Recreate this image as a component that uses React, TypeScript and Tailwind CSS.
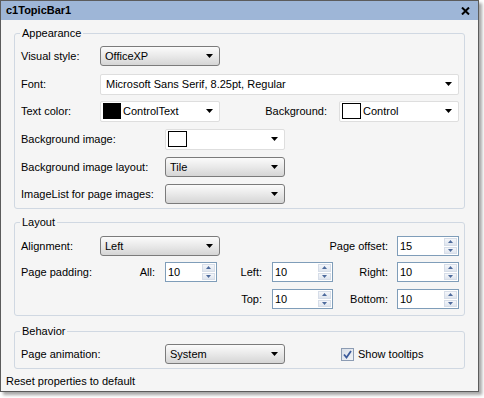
import React from 'react'

// Small black combo arrow
function Arrow() {
  return (
    <svg width="7" height="4" viewBox="0 0 7 4" className="shrink-0">
      <polygon points="0,0 7,0 3.5,4" fill="#000" />
    </svg>
  )
}

function XpCombo({ text, className }: { text?: string; className: string }) {
  return (
    <div
      className={
        'h-[20px] rounded-[3px] border border-[#7b7b7b] bg-gradient-to-b from-[#fbfbfb] via-[#e9e9e9] to-[#d5d5d5] flex items-center justify-between pl-[4px] pr-[6px] ' +
        className
      }
    >
      <span>{text}</span>
      <Arrow />
    </div>
  )
}

function WhiteCombo({
  text,
  swatch,
  className,
}: {
  text?: string
  swatch?: 'black' | 'white'
  className: string
}) {
  return (
    <div
      className={
        'h-[21px] rounded-[2px] border border-[#dedede] bg-white flex items-center justify-between pl-[2px] pr-[6px] ' +
        className
      }
    >
      <div className="flex items-center">
        {swatch === 'black' && <div className="w-[18px] h-[16px] bg-black border border-black" />}
        {swatch === 'white' && <div className="w-[19px] h-[16px] bg-white border border-black" />}
        {text && <span className={swatch ? 'ml-[2px]' : 'ml-[3px]'}>{text}</span>}
      </div>
      <Arrow />
    </div>
  )
}

function SpinArrow({ up }: { up?: boolean }) {
  return (
    <svg width="5" height="3" viewBox="0 0 5 3">
      <polygon points={up ? '0,3 5,3 2.5,0' : '0,0 5,0 2.5,3'} fill="#4d6a9c" />
    </svg>
  )
}

function Spin({ value, className }: { value: string; className: string }) {
  return (
    <div className={'h-[20px] border border-[#7f9db9] bg-white flex ' + className}>
      <span className="flex-1 pl-[2px] flex items-center">{value}</span>
      <div className="w-[15px] flex flex-col gap-[1px] p-[1px]">
        <div className="flex-1 flex items-center justify-center border border-[#d6dde8] bg-gradient-to-b from-[#f4f6fa] to-[#dfe5ee]">
          <SpinArrow up />
        </div>
        <div className="flex-1 flex items-center justify-center border border-[#d6dde8] bg-gradient-to-b from-[#f4f6fa] to-[#dfe5ee]">
          <SpinArrow />
        </div>
      </div>
    </div>
  )
}

function Group({ title, className, children }: { title: string; className: string; children: React.ReactNode }) {
  return (
    <div className={'relative rounded-[3px] border border-[#d0d8e2] ' + className}>
      <span className="absolute -top-[7px] left-[5px] px-[2px] bg-[#f5f5f5] leading-[13px]">{title}</span>
      {children}
    </div>
  )
}

export default function App() {
  return (
    <div className="w-[484px] h-[398px] bg-white font-['Liberation_Sans',Arial,sans-serif] text-[11px] leading-[13px] text-black">
      <div className="w-[479px] h-[392px] border border-[#5c5c5c] bg-[#f5f5f5] flex flex-col shadow-[3px_3px_3px_rgba(0,0,0,0.35)]">
        {/* Title bar */}
        <div className="h-[19px] shrink-0 bg-[#9eb6d7] flex items-center justify-between pl-[5px] pr-[8px]">
          <span className="font-bold">c1TopicBar1</span>
          <svg width="9" height="8" viewBox="0 0 9 8">
            <path d="M1 0.5 L8 7.5 M8 0.5 L1 7.5" stroke="#000" strokeWidth="2" />
          </svg>
        </div>

        <div className="px-[13px] pt-[13px]">
          <Group title="Appearance" className="pt-[12px] pb-[4px] pl-[6px] pr-[5px]">
            <div className="flex items-center h-[20px]">
              <span className="w-[79px]">Visual style:</span>
              <XpCombo text="OfficeXP" className="w-[120px]" />
            </div>
            <div className="flex items-center h-[20px] mt-[8px]">
              <span className="w-[79px]">Font:</span>
              <WhiteCombo text="Microsoft Sans Serif, 8.25pt, Regular" className="flex-1" />
            </div>
            <div className="flex items-center h-[20px] mt-[7px]">
              <span className="w-[79px]">Text color:</span>
              <WhiteCombo text="ControlText" swatch="black" className="w-[120px]" />
              <span className="flex-1 text-right">Background:</span>
              <WhiteCombo text="Control" swatch="white" className="w-[120px] ml-[12px]" />
            </div>
            <div className="flex items-center h-[20px] mt-[8px]">
              <span className="w-[144px]">Background image:</span>
              <WhiteCombo swatch="white" className="w-[120px]" />
            </div>
            <div className="flex items-center h-[20px] mt-[8px]">
              <span className="w-[144px]">Background image layout:</span>
              <XpCombo text="Tile" className="w-[120px]" />
            </div>
            <div className="flex items-center h-[20px] mt-[7px]">
              <span className="w-[144px]">ImageList for page images:</span>
              <XpCombo className="w-[120px]" />
            </div>
          </Group>

          <Group title="Layout" className="mt-[13px] pt-[13px] pb-[6px] pl-[6px] pr-[5px]">
            <div className="flex items-center h-[20px]">
              <span className="w-[79px]">Alignment:</span>
              <XpCombo text="Left" className="w-[120px]" />
              <span className="flex-1 text-right">Page offset:</span>
              <Spin value="15" className="w-[62px] ml-[9px]" />
            </div>
            <div className="flex items-center h-[20px] mt-[6px]">
              <div className="w-[134px] flex justify-between">
                <span>Page padding:</span>
                <span>All:</span>
              </div>
              <Spin value="10" className="w-[52px] ml-[10px]" />
              <span className="w-[45px] text-right">Left:</span>
              <Spin value="10" className="w-[61px] ml-[10px]" />
              <span className="flex-1 text-right">Right:</span>
              <Spin value="10" className="w-[62px] ml-[9px]" />
            </div>
            <div className="flex items-center h-[20px] mt-[7px]">
              <div className="w-[196px]" />
              <span className="w-[45px] text-right">Top:</span>
              <Spin value="10" className="w-[61px] ml-[10px]" />
              <span className="flex-1 text-right">Bottom:</span>
              <Spin value="10" className="w-[62px] ml-[9px]" />
            </div>
          </Group>

          <Group title="Behavior" className="mt-[15px] pt-[12px] pb-[4px] pl-[6px] pr-[5px]">
            <div className="flex items-center h-[20px]">
              <span className="w-[144px]">Page animation:</span>
              <XpCombo text="System" className="w-[120px]" />
              <div className="ml-[56px] w-[13px] h-[13px] border border-[#8c9cb3] bg-gradient-to-br from-[#d9dfe8] to-[#f2f4f7] flex items-center justify-center">
                <svg width="9" height="9" viewBox="0 0 9 9">
                  <path d="M1 4.5 L3.5 7.5 L8 1" stroke="#3b5a9b" strokeWidth="1.8" fill="none" />
                </svg>
              </div>
              <span className="ml-[4px]">Show tooltips</span>
            </div>
          </Group>
        </div>

        <div className="pl-[5px] mt-[6px]">Reset properties to default</div>
      </div>
    </div>
  )
}
